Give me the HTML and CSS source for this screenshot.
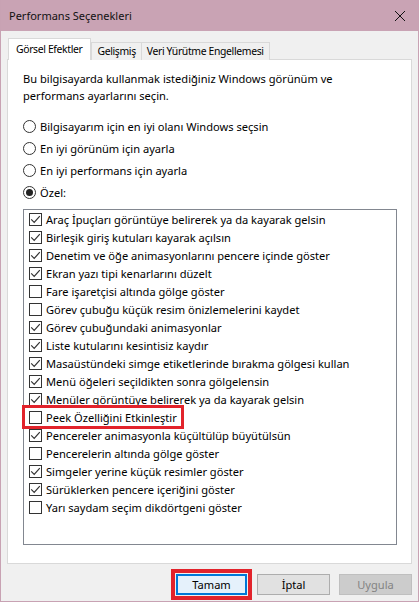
FILE: index.html
```html
<!DOCTYPE html>
<html lang="tr">
<head>
    <meta charset="UTF-8">
    <title>Performans Seçenekleri</title>
    <link rel="stylesheet" href="styles.css">
</head>
<body>
    <div class="window">
        <div class="titlebar">
            <span class="title">Performans Seçenekleri</span>
            <svg class="close" width="12" height="12" viewBox="0 0 12 12">
                <path d="M1 1 L11 11 M11 1 L1 11" stroke="#111" stroke-width="1" fill="none"/>
            </svg>
        </div>

        <div class="content">
            <div class="tabs">
                <div class="tab active">Görsel Efektler</div>
                <div class="tab">Gelişmiş</div>
                <div class="tab">Veri Yürütme Engellemesi</div>
            </div>

            <div class="panel">
                <p class="intro">Bu bilgisayarda kullanmak istediğiniz Windows görünüm ve<br>performans ayarlarını seçin.</p>

                <div class="radios">
                    <label class="radio"><span class="dot"></span>Bilgisayarım için en iyi olanı Windows seçsin</label>
                    <label class="radio"><span class="dot"></span>En iyi görünüm için ayarla</label>
                    <label class="radio"><span class="dot"></span>En iyi performans için ayarla</label>
                    <label class="radio checked"><span class="dot"></span>Özel:</label>
                </div>

                <div class="listbox" id="effects"></div>
            </div>

            <div class="buttons">
                <button class="btn default">Tamam</button>
                <button class="btn">İptal</button>
                <button class="btn disabled">Uygula</button>
            </div>
        </div>
    </div>

    <script>
        // Effect list: [label, checked, highlighted]
        const effects = [
            ['Araç İpuçları görüntüye belirerek ya da kayarak gelsin', true],
            ['Birleşik giriş kutuları kayarak açılsın', true],
            ['Denetim ve öğe animasyonlarını pencere içinde göster', true],
            ['Ekran yazı tipi kenarlarını düzelt', true],
            ['Fare işaretçisi altında gölge göster', false],
            ['Görev çubuğu küçük resim önizlemelerini kaydet', false],
            ['Görev çubuğundaki animasyonlar', true],
            ['Liste kutularını kesintisiz kaydır', true],
            ['Masaüstündeki simge etiketlerinde bırakma gölgesi kullan', true],
            ['Menü öğeleri seçildikten sonra gölgelensin', true],
            ['Menüler görüntüye belirerek ya da kayarak gelsin', true],
            ['Peek Özelliğini Etkinleştir', false, true],
            ['Pencereler animasyonla küçültülüp büyütülsün', true],
            ['Pencerelerin altında gölge göster', false],
            ['Simgeler yerine küçük resimler göster', true],
            ['Sürüklerken pencere içeriğini göster', true],
            ['Yarı saydam seçim dikdörtgeni göster', false]
        ];

        const tick = '<svg width="11" height="11" viewBox="0 0 11 11"><path d="M1.2 5.4 L4.2 8.4 L9.8 2.2" stroke="#333" stroke-width="1.2" fill="none"/></svg>';

        const list = document.getElementById('effects');
        effects.forEach(item => {
            const row = document.createElement('div');
            row.className = 'row';
            row.innerHTML = `
                <span class="item${item[2] ? ' marked' : ''}">
                    <span class="box">${item[1] ? tick : ''}</span>${item[0]}
                </span>
            `;
            list.appendChild(row);
        });
    </script>
</body>
</html>
```

FILE: styles.css
```css
body {
    margin: 0;
    font-family: 'Noto Sans', 'Open Sans', sans-serif;
    font-size: 11.1px;
    color: #000;
}
.window {
    width: 419px;
    height: 602px;
    box-sizing: border-box;
    border: 1px solid #c8a2b3;
    border-top: none;
    background-color: #f0f0f0;
    display: flex;
    flex-direction: column;
}
.titlebar {
    height: 31px;
    flex-shrink: 0;
    background-color: #c9a3b4;
    display: flex;
    align-items: center;
    justify-content: space-between;
    padding: 0 12px 0 8px;
    font-size: 11px;
}
.title {
    color: #111;
}
.content {
    padding: 6px 6px 0 6px;
}
.tabs {
    display: flex;
    align-items: flex-end;
    height: 22px;
    padding-left: 1px;
}
.tab {
    height: 17px;
    line-height: 17px;
    padding: 0 5px;
    border: 1px solid #d9d9d9;
    border-bottom: none;
    margin-left: -1px;
    background-color: #f0f0f0;
    position: relative;
    top: 1px;
    font-size: 10.4px;
    letter-spacing: -0.35px;
}
.tab.active {
    height: 21px;
    line-height: 21px;
    padding: 0 8px 0 7px;
    margin-left: 0;
    margin-right: 1px;
    background-color: #fff;
    z-index: 1;
}
.panel {
    background-color: #fff;
    border: 1px solid #d9d9d9;
    height: 505px;
    box-sizing: border-box;
    padding: 10px 14px 0 15px;
}
.intro {
    margin: 0 0 14px 0;
    line-height: 17px;
}
.radios {
    display: flex;
    flex-direction: column;
    gap: 5px;
    margin-bottom: 8px;
}
.radio {
    display: flex;
    align-items: center;
    height: 17px;
}
.dot {
    width: 11px;
    height: 11px;
    border: 1px solid #333;
    border-radius: 50%;
    margin-right: 4px;
    display: flex;
    align-items: center;
    justify-content: center;
}
.radio.checked .dot::after {
    content: '';
    width: 7px;
    height: 7px;
    border-radius: 50%;
    background-color: #222;
}
.listbox {
    height: 336px;
    box-sizing: border-box;
    border: 1px solid #828790;
    padding: 0 0 0 5px;
}
.row {
    height: 18px;
    display: flex;
    align-items: center;
}
.item {
    display: inline-flex;
    align-items: center;
    height: 16px;
}
.item.marked {
    height: 18px;
    margin-left: -4px;
    padding: 0 4px 0 4px;
    outline: 3px solid #e2232b;
}
.box {
    width: 11px;
    height: 11px;
    border: 1px solid #333;
    margin-right: 4px;
    display: flex;
    align-items: center;
    justify-content: center;
    background-color: #fff;
}
.buttons {
    display: flex;
    justify-content: flex-end;
    gap: 9px;
    padding: 10px 0 0 0;
}
.btn {
    width: 73px;
    height: 21px;
    font-family: inherit;
    font-size: 11.1px;
    background-color: #e1e1e1;
    border: 1px solid #adadad;
    color: #000;
    padding: 0;
}
.btn.default {
    width: 71px;
    background-color: #e5f1fb;
    border: 2px solid #0078d7;
    outline: 4px solid #e2232b;
    outline-offset: 1px;
    margin-right: 1px;
}
.btn.disabled {
    background-color: #cccccc;
    border-color: #bfbfbf;
    color: #838383;
}
```
